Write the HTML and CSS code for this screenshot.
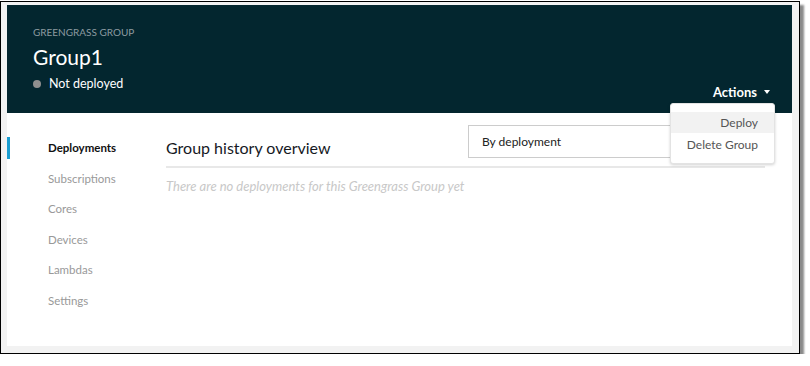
FILE: index.html
```html
<!DOCTYPE html>
<html lang="en">
<head>
    <meta charset="UTF-8">
    <title>Greengrass Group</title>
    <link rel="stylesheet" href="styles.css">
</head>
<body>
    <div class="frame">
        <div class="header">
            <div class="header-left">
                <div class="eyebrow">GREENGRASS GROUP</div>
                <h1>Group1</h1>
                <div class="status"><span class="dot"></span>Not deployed</div>
            </div>
            <div class="actions">
                <span>Actions</span>
                <span class="caret"></span>
                <!-- open actions menu -->
                <div class="menu">
                    <div class="menu-item active">Deploy</div>
                    <div class="menu-item">Delete Group</div>
                </div>
            </div>
        </div>
        <div class="main">
            <ul class="nav">
                <li class="current">Deployments</li>
                <li>Subscriptions</li>
                <li>Cores</li>
                <li>Devices</li>
                <li>Lambdas</li>
                <li>Settings</li>
            </ul>
            <div class="content">
                <div class="content-head">
                    <h2>Group history overview</h2>
                    <div class="select">By deployment</div>
                </div>
                <p class="empty">There are no deployments for this Greengrass Group yet</p>
            </div>
        </div>
    </div>
</body>
</html>
```

FILE: styles.css
```css
body {
    margin: 0;
    font-family: Lato, "Liberation Sans", sans-serif;
    background: #fff;
}
.frame {
    width: 785px;
    margin-top: 1px;
    padding: 3px 7px 7px 6px;
    background: #f2f2f2;
    border: 1px solid #000;
    box-shadow: 4px 4px 2px #8a8a8a;
}
.header {
    height: 108px;
    background: #03262f;
    display: flex;
    justify-content: space-between;
    align-items: flex-end;
    padding: 0 22px 0 26px;
    box-sizing: border-box;
}
.header-left {
    align-self: flex-start;
    padding-top: 21px;
}
.eyebrow {
    font-size: 10px;
    color: #8c9ba1;
}
h1 {
    margin: 6px 0 0;
    font-size: 21px;
    font-weight: 400;
    color: #fff;
    line-height: 26px;
}
.status {
    margin-top: 6px;
    font-size: 12.5px;
    color: #fff;
    display: flex;
    align-items: center;
}
.dot {
    width: 8px;
    height: 8px;
    border-radius: 50%;
    background: #8f8f8f;
    margin: 0 8px 0 0;
}
.actions {
    position: relative;
    font-size: 13px;
    font-weight: 700;
    color: #fff;
    display: flex;
    align-items: center;
    padding-bottom: 13px;
}
.caret {
    margin-left: 7px;
    border-left: 3px solid transparent;
    border-right: 3px solid transparent;
    border-top: 4px solid #fff;
}
.menu {
    position: absolute;
    top: 19px;
    right: -5px;
    width: 103px;
    background: #fff;
    border: 1px solid #e3e3e3;
    border-radius: 3px;
    box-shadow: 0 1px 3px rgba(0, 0, 0, 0.18);
    padding: 8px 0 8px;
    z-index: 2;
}
.menu-item {
    text-align: right;
    white-space: nowrap;
    padding: 2px 16px 2px 0;
    font-size: 12px;
    font-weight: 400;
    color: #555;
    line-height: 17px;
}
.menu-item.active {
    background: #f2f2f2;
    margin-bottom: 1px;
}
.main {
    height: 233px;
    background: #fff;
    display: flex;
}
.nav {
    list-style: none;
    margin: 0;
    padding: 24px 0 0;
    width: 159px;
}
.nav li {
    font-size: 11.5px;
    color: #999;
    line-height: 22px;
    padding-left: 38px;
    margin-bottom: 8.6px;
    border-left: 3px solid transparent;
}
.nav li.current {
    color: #111;
    font-weight: 700;
    border-left-color: #1b9ed1;
}
.content {
    flex: 1;
    padding-right: 27px;
}
.content-head {
    display: flex;
    justify-content: space-between;
    align-items: flex-end;
    border-bottom: 2px solid #e8e8e8;
    height: 53px;
}
h2 {
    margin: 0 0 9px;
    font-size: 16px;
    font-weight: 400;
    color: #16191f;
}
.select {
    width: 297px;
    height: 33px;
    box-sizing: border-box;
    border: 1px solid #ccc;
    font-size: 12px;
    color: #222;
    padding: 0 13px;
    line-height: 31px;
    margin-bottom: 8px;
}
.empty {
    margin: 10px 0 0;
    font-size: 13px;
    font-style: italic;
    color: #c8c8c8;
}
```
